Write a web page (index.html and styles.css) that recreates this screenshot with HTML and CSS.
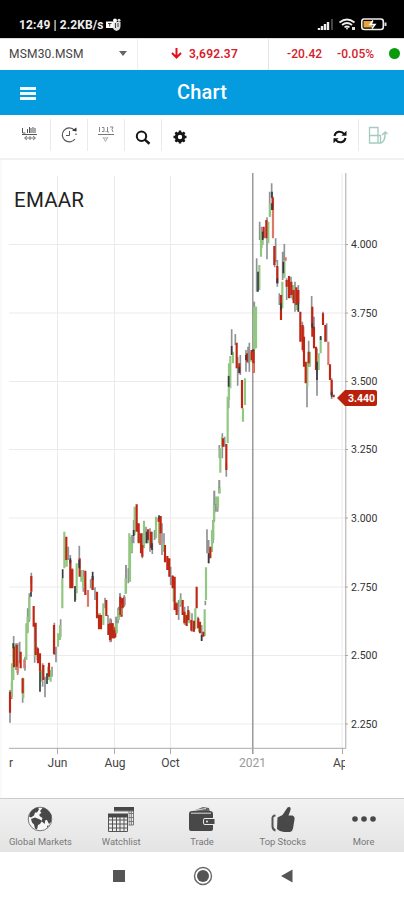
FILE: index.html
```
<!DOCTYPE html>
<html lang="en">
<head>
    <meta charset="UTF-8">
    <meta name="viewport" content="width=device-width, initial-scale=1.0">
    <title>Chart</title>
    <link rel="stylesheet" href="styles.css">
</head>
<body>
    <div class="status">
        <span class="clock">12:49 | 2.2KB/s</span>
        <svg class="teams" width="16" height="14" viewBox="0 0 16 14">
            <path d="M6 4h8.500v4q0 4-4 5-3-1-4.500-4z" fill="#ddd"/>
            <circle cx="9" cy="2.500" r="2" fill="#fff"/><circle cx="13" cy="2.200" r="1.500" fill="#ddd"/>
            <path d="M0 3.500h7.500V10H0z" fill="#fff"/><path d="M2 5.500h3.500M3.700 5.500v3M9.500 5v5M12 5v4" stroke="#444" fill="none"/>
        </svg>
        <svg class="signal" width="72" height="16" viewBox="0 0 72 16">
            <path d="M2 12v2M5 10v4M8 8v6M11 6v8" stroke="#eee" stroke-width="2.400"/>
            <path d="M15 3v11" stroke="#444" stroke-width="2"/>
            <path d="M22.500 6.500q7.500-6 15 0M25 9q5-4 10 0M27.500 11.300q2.500-2 5 0" stroke="#eee" stroke-width="1.700" fill="none"/>
            <path d="M28.500 11.500h3L30 14zM35 11h3v3h-3z" fill="#ddd"/>
            <rect x="44.800" y="3" width="21.500" height="10.500" rx="2.500" stroke="#eee" stroke-width="1.600" fill="none"/>
            <path d="M68.500 6.500v3.500" stroke="#ddd" stroke-width="2"/>
            <path d="M46.500 5h9v6.500h-9z" fill="#e8a33a"/><path d="M56 4.500l-3 4h5l-3 4" stroke="#fff" stroke-width="1.500" fill="none"/>
        </svg>
    </div>

    <div class="ticker">
        <div class="symbol">MSM30.MSM <i class="caret"></i></div>
        <div class="last">
            <svg width="11" height="11" viewBox="0 0 11 11"><path d="M5.500 0v9M1 5l4.500 4.500L10 5" stroke="#e3101b" stroke-width="2" fill="none"/></svg>
            <b>3,692.37</b>
        </div>
        <div class="change"><span>-20.42</span><span>-0.05%</span><i class="dot"></i></div>
    </div>

    <div class="header">
        <div class="menu"><i></i><i></i><i></i></div>
        <h1>Chart</h1>
    </div>

    <div class="toolbar">
        <div class="tool first">
            <svg width="18" height="16" viewBox="0 0 18 16"><path d="M1.500 2v5h3M6.500 3v4M8.500 1v6M10 2v5M12 1v6M14 2v5M1 8.500h15" stroke="#555" fill="none"/><path d="M4 12h10M6 10l-2.500 2L6 14M12 10l2.500 2-2.500 2M9 10v4" stroke="#777" fill="none"/></svg>
        </div>
        <div class="tool clocktool">
            <svg width="18" height="18" viewBox="0 0 18 18"><path d="M14.500 4.200A7 7 0 1 0 15 13M16 7.500V9" stroke="#555" stroke-width="1.200" fill="none"/><path d="M12 4.500l4.500 1V1.500z" fill="#333"/><path d="M9.500 5v4.500H6" stroke="#555" fill="none"/></svg>
        </div>
        <div class="tool">
            <svg width="18" height="18" viewBox="0 0 18 18"><path d="M2.500 1v5M5 1.500h2v4H5M9 5v1M10.500 1v5h1.500M13 1h3l-1 2.500 1 2.500" stroke="#888" fill="none"/><path d="M1 8.500h16" stroke="#777"/><path d="M6 11l2.500 4.500L11 11M7 12h3" stroke="#aaa" fill="none"/></svg>
        </div>
        <div class="tool">
            <svg class="low" width="16" height="16" viewBox="0 0 16 16"><circle cx="6.500" cy="6.300" r="4.700" stroke="#151515" stroke-width="2" fill="none"/><path d="M9.800 9.600l4.700 4.200" stroke="#151515" stroke-width="2.500"/></svg>
        </div>
        <div class="tool gear">
            <svg class="low" width="14" height="14" viewBox="0 0 14 14"><circle cx="7" cy="7" r="3.700" stroke="#151515" stroke-width="3" fill="none"/><path d="M7 .5v2M7 11.500v2M.5 7h2M11.500 7h2M2.400 2.400l1.500 1.500M10.100 10.100l1.500 1.500M2.400 11.600l1.500-1.500M10.100 3.900l1.500-1.500" stroke="#151515" stroke-width="2.500"/></svg>
        </div>
        <div class="tool refresh">
            <svg class="low" width="14" height="14" viewBox="0 0 14 14"><path d="M1.500 6C2.500 1 8.500.5 11 3.800M12.500 8C11.500 13 5.500 13.500 3 10.200" stroke="#151515" stroke-width="2" fill="none"/><path d="M13.500.7v5.100H8.400zM.5 13.300V8.200h5.100z" fill="#151515"/></svg>
        </div>
        <div class="tool rotate">
            <svg width="20" height="19" viewBox="0 0 20 19"><path d="M1.500 1.500H10V17H1.500zM1.500 9.500h11V17H10" stroke="#a3cbbf" stroke-width="1.300" fill="none"/><path d="M13 17q4.500-2 4-10M14 9l3.300-3L19.500 8" stroke="#a3cbbf" stroke-width="1.500" fill="none"/></svg>
        </div>
    </div>

    <div class="chart">
        <svg width="404" height="638" viewBox="0 160 404 638">
            <path class="grid" d="M9 244.500H345M9 313H345M9 381.500H345M9 449.500H345M9 518H345M9 587H345M9 655.500H345M9 724H345M57.500 176V748M114.500 176V748M170.500 176V748M342 174V748"/>
            <path class="year" d="M252.800 173V754"/>
            <path class="axis" d="M9 748.300H345.800V173M57.500 748v6M114.500 748v6M170.500 748v6M342.500 748v6M345 244.500h3M345 313h3M345 381.500h3M345 449.500h3M345 518h3M345 587h3M345 655.500h3M345 724h3"/>

            <!-- April to August -->
            <g transform="translate(0 500) scale(.3333)">
                <path class="wick" d="M30 570V668M35 545V597M41 408V470M48 430V510M53 430V525M59 425V490M68 533V608M75 470V512M83 325V395M88 280V365M94 218V250M104 370V488M112 440V480M128 490V560M135 530V592M156 500V530M163 368V465M168 440V487M182 358V410M205 140V180M211 165V240M217 205V260M238 137V200M250 210V275M272 238V265M285 262V300M297 340V385M315 293V325M324 345V405M343 385V415M360 280V350M356 320V360M372 290V320M378 195V240"/>
                <path class="light" d="M73 478V505M53 480V520M264 270V320"/>
                <path class="up" d="M36 490V590M40 430V540M46 440V500M70 535V595M79 370V480M83 350V400M88 292V360M105 425V470M124 510V545M145 500V540M152 510V545M174 400V440M180 375V420M187 235V325M193 95V205M200 140V200M226 270V300M230 190V280M244 210V245M250 230V265M277 235V270M300 340V370M310 310V375M350 350V400M356 330V355M378 225V280M388 100V245"/>
                <path class="down" d="M30 575V638M42 440V502M50 435V500M62 455V505M68 535V580M94 228V275M101 318V380M107 368V465M114 445V490M120 460V515M130 495V540M147 488V530M162 375V462M199 110V180M211 180V265M217 208V265M239 175V230M256 212V285M278 228V270M291 275V355M297 345V388M303 345V388M319 300V348M326 372V405M332 358V425M338 370V415M346 380V412M365 295V350M373 290V315"/>
                <path class="dark" d="M93 275V290M120 515V575M141 520V552M188 208V235M211 175V190M225 258V305M238 180V205M278 215V240M40 430V445"/>
            </g>

            <!-- August to November -->
            <g transform="translate(110 480) scale(.3333)">
                <path class="wick" d="M1 415V487M18 410V460M30 340V410M24 385V430M43 345V380M48 255V330M55 265V310M66 165V220M71 120V190M97 160V235M108 140V190M120 145V215M127 155V222M134 150V180M156 130V225M162 160V215M182 260V315M188 285V320M206 360V420M212 340V380M224 380V435M234 378V425M246 400V455M264 410V445M286 362V376M291 148V220M296 180V250M306 170V215M309 120V190M313 32V125M318 50V95M328 0V40M275 435V482"/>
                <path class="up" d="M19 430V460M25 390V420M34 370V405M47 295V342M60 170V305M66 190V215M74 80V165M86 150V185M102 122V205M115 165V190M138 110V175M147 120V190M160 190V210M191 300V365M200 365V395M212 355V375M226 400V435M238 395V430M256 385V447M267 430V455M284 388V468M288 262V360M306 150V215M310 120V180M323 50V80M328 20V40"/>
                <path class="light" d="M150 120V195"/>
                <path class="down" d="M0 430V480M7 430V475M13 450V475M31 350V405M38 355V385M80 73V155M86 130V190M93 160V220M97 195V230M114 148V180M123 155V205M146 113V125M152 108V160M165 195V247M172 228V270M178 235V290M188 288V325M194 290V390M200 370V405M218 360V405M223 395V430M230 405V438M235 390V420M244 420V452M252 422V455M260 320V385M265 415V445M270 425V460M280 455V470M301 200V235"/>
                <path class="dark" d="M110 155V190M126 190V210M296 220V250M275 465V483M71 150V168M147 106V115"/>
            </g>

            <!-- November to January -->
            <g transform="translate(190 300) scale(.3333)">
                <path class="wick" d="M73 572V640M83 590V635M88 435V475M88 540V580M97 400V475M104 410V440M109 490V530M116 225V325M125 88V165M136 102V135M143 170V257M151 165V225M168 150V215M174 140V190M178 128V215M192 5V40"/>
                <path class="up" d="M72 615V660M78 590V612M84 590V625M88 565V580M91 445V518M96 410V440M113 290V430M117 190V300M121 168V265M129 155V190M159 325V365M165 235V315M184 155V185M193 20V150M198 20V145"/>
                <path class="down" d="M99 415V440M109 432V510M140 128V205M148 190V220M156 240V325M171 160V185M185 150V180M191 150V218"/>
                <path class="dark" d="M125 138V165M116 228V260M148 200V218M168 165V180M190 148V160"/>
            </g>

            <!-- January to April -->
            <g transform="translate(235 170) scale(.3333)">
                <path class="wick" d="M58 395V440M65 265V365M74 155V210M80 170V235M96 142V268M104 65V140M110 40V80M122 205V275M119 255V292M127 270V350M133 370V405M148 222V320M143 245V330M155 325V390M168 320V385M180 335V425M190 345V425M202 455V515M216 600V712M221 512V590M230 378V470M237 440V535M246 535V677M264 425V460M275 460V515M290 625V687"/>
                <path class="up" d="M58 410V535M63 410V532M73 285V360M78 190V260M83 180V225M100 155V220M105 100V140M142 335V415M148 270V325M174 345V390M217 575V650M225 545V590M251 550V600M257 500V550M185 360V420"/>
                <path class="light" d="M114 80V205M152 262V272M280 515V585M55 545V608M205 470V545"/>
                <path class="down" d="M55 545V580M86 170V205M94 150V205M113 85V120M118 228V285M127 288V340M138 375V450M155 330V350M162 318V385M169 335V375M176 360V400M184 352V405M190 360V400M196 425V515M203 465V540M207 500V590M212 575V640M221 545V580M232 410V500M237 470V535M243 530V600M264 430V465M271 465V515M285 583V630M290 630V675M296 674V682"/>
                <path class="dark" d="M69 305V365M111 65V85M111 100V120M145 275V310M190 398V425M127 325V340M232 460V475M257 498V510M246 575V630M138 400V420M290 665V680M83 185V210"/>
            </g>

            <g class="price">
                <text x="351" y="248">4.000</text><text x="351" y="317">3.750</text>
                <text x="351" y="385">3.500</text><text x="351" y="453">3.250</text>
                <text x="351" y="522">3.000</text><text x="351" y="590.500">2.750</text>
                <text x="351" y="659">2.500</text><text x="351" y="727.500">2.250</text>
            </g>
            <path class="tag" d="M337 398l8-8h30q2 0 2 2v12q0 2-2 2h-30z"/>
            <text class="tag-text" x="348" y="401.500">3.440</text>
            <g class="month">
                <text x="9" y="767">r</text><text x="57.500" y="767" text-anchor="middle">Jun</text>
                <text x="115" y="767" text-anchor="middle">Aug</text><text x="170.500" y="767" text-anchor="middle">Oct</text>
                <text class="muted" x="252.500" y="767" text-anchor="middle">2021</text>
            </g>
            <svg x="330" y="755" width="15" height="20"><text class="month" x="3" y="12">Ap</text></svg>
            <text class="name" x="14" y="206.500" textLength="70">EMAAR</text>
        </svg>
    </div>

    <div class="tabs">
        <div class="tab">
            <svg width="26" height="26" viewBox="0 0 26 26"><circle cx="13" cy="13" r="11.800" fill="#f7f7f7" stroke="#777"/><path d="M3 7q3-5 8-5.500l1 2-2 3-2 0-1 3-3 2-2-1zM4 13l4-1.500 5 2 2 1.500-2 3-2 1-1 4.500-2-1-1-4-2-2zM13 5l3-3.500q6 2 8.500 8L24 16l-2 2-2-4-1.500 0-1 4-3-3 1-3-3-2 0-2 2-1zM20 20l2-1-2 3z" fill="#484848"/></svg>
            <span>Global Markets</span>
        </div>
        <div class="tab">
            <svg width="26" height="26" viewBox="0 0 26 26"><path d="M6 1h20v4H6z" fill="#484848"/><path d="M6 5h19.500v14H20M21 5v14M23.300 5v14M6 7.500h19.500M20 11.500h5.500M20 15.500h5.500" stroke="#777" fill="none"/><path d="M0 7h20.500v19H0z" fill="#eee"/><path d="M.5 10v15.500h19V10M4.500 10v15.500M8.500 10v15.500M12 10v15.500M16 10v15.500M.5 14h19M.5 18h19M.5 22h19" stroke="#555" fill="none"/><path d="M0 7.500h20v4H0z" fill="#484848"/></svg>
            <span>Watchlist</span>
        </div>
        <div class="tab">
            <svg width="26" height="26" viewBox="0 0 26 26"><path d="M4 5l10-4 6 1 1 4z" fill="#666"/><path d="M0 8q0-3 3-3h18q3 0 3 3v4h-8q-2 0-2 3v1q0 3 2 3h8v4q0 2-2 2H2q-2 0-2-2z" fill="#484848"/><path d="M2 7.200h20M5 4.500l12-2" stroke="#ddd"/><path d="M16 13h9.500v5H16q-1 0-1-1v-3q0-1 1-1z" fill="#484848"/><circle cx="18" cy="15.500" r="1" fill="#eee"/></svg>
            <span>Trade</span>
        </div>
        <div class="tab">
            <svg width="26" height="26" viewBox="0 0 26 26"><path d="M7.500 11.500l5-2.500 4-6q1-2.500 3-2 2 .5.500 4.500l-1.500 4h4q2.500 1 2 4l-1.500 9q-.5 3-3 3.500h-6q-4 0-7-3z" fill="#484848"/><path d="M5.500 9.500Q2 9.500 2.500 13.500v7q.5 3.500 3 4" stroke="#555" stroke-width="2" fill="none"/></svg>
            <span>Top Stocks</span>
        </div>
        <div class="tab">
            <svg width="26" height="26" viewBox="0 0 26 26"><circle cx="4" cy="13" r="2.800" fill="#484848"/><circle cx="13" cy="13" r="2.800" fill="#484848"/><circle cx="22" cy="13" r="2.800" fill="#484848"/></svg>
            <span>More</span>
        </div>
    </div>

    <div class="navbar">
        <svg width="14" height="14" viewBox="0 0 14 14"><path d="M1 1h12v12H1z" fill="#555"/></svg>
        <svg width="20" height="20" viewBox="0 0 20 20"><circle cx="10" cy="10" r="8.500" stroke="#666" stroke-width="1.400" fill="none"/><circle cx="10" cy="10" r="6" fill="#555"/></svg>
        <svg width="14" height="14" viewBox="0 0 14 14"><path d="M1 7l11.500-6.500v13z" fill="#555"/></svg>
    </div>
</body>
</html>
```

FILE: styles.css
```
* {
    box-sizing: border-box;
}
body {
    margin: 0;
    width: 404px;
    height: 900px;
    overflow: hidden;
    font-family: Roboto, "Liberation Sans", sans-serif;
    background-color: #fff;
}
svg {
    display: block;
}
.status {
    height: 38px;
    padding: 14px 15px 0 19px;
    display: flex;
    background-color: #000;
    color: #eee;
}
.clock {
    width: 87px;
    margin-top: 3px;
    font-size: 12px;
    font-weight: bold;
    line-height: 16px;
    letter-spacing: 0.1px;
    white-space: nowrap;
}
.teams {
    margin-top: 4px;
}
.signal {
    margin: 2px 0 0 auto;
}
.ticker {
    height: 32px;
    display: flex;
    font-size: 12px;
    color: #d5202b;
    border-top: 1px solid #ddd;
}
.symbol {
    width: 138px;
    padding: 0 10px 2px 9px;
    display: flex;
    align-items: center;
    justify-content: space-between;
    letter-spacing: 0.2px;
    color: #444;
    border-right: 1px solid #eee;
}
.caret {
    border: 4px solid transparent;
    border-top: 5px solid #666;
    border-bottom: 0;
}
.last {
    width: 131px;
    display: flex;
    align-items: center;
    padding: 0 0 2px 33px;
    gap: 7px;
    border-right: 1px solid #e4e4e4;
}
.last b {
    font-weight: 600;
    letter-spacing: 0.2px;
}
.change {
    flex: 1;
    display: flex;
    align-items: center;
    padding: 0 0 2px 18px;
    font-weight: 500;
    letter-spacing: 0.1px;
}
.change span {
    width: 50px;
    white-space: nowrap;
}
.dot {
    width: 11px;
    height: 11px;
    margin-left: 2px;
    flex: none;
    border-radius: 50%;
    background-color: #079b0b;
}
.header {
    height: 45px;
    display: grid;
    grid-template-columns: 60px 1fr 60px;
    align-items: center;
    background-color: #059bdf;
}
.menu {
    padding: 2px 0 0 20px;
    display: flex;
    flex-direction: column;
    gap: 2px;
}
.menu i {
    width: 16px;
    height: 3px;
    background-color: #eefaff;
}
.header h1 {
    margin: 0 0 1px;
    color: #fff;
    font-size: 20px;
    font-weight: 500;
    letter-spacing: 0.2px;
    text-align: center;
}
.toolbar {
    height: 45px;
    padding: 4px 2px 7px 2px;
    display: flex;
    border-bottom: 2px solid #f1f1f1;
}
.tool {
    width: 37px;
    padding-top: 7px;
    display: flex;
    justify-content: center;
    align-items: flex-start;
    border-right: 1px solid #eaeaea;
}
.tool .low {
    margin-top: 4px;
}
.tool.first {
    width: 49px;
    padding-left: 7px;
}
.tool.gear {
    width: 36px;
    border: 0;
}
.tool.refresh {
    margin-left: auto;
}
.tool.rotate {
    width: 43px;
    padding-right: 5px;
    border: 0;
}
.chart {
    height: 638px;
    border-left: 2px solid #fafafa;
}
.chart > svg {
    margin-left: -2px;
}
.grid {
    stroke: #ebebeb;
    fill: none;
}
.axis {
    stroke: #aaa;
    fill: none;
}
.year {
    stroke: #8b8b8b;
    stroke-width: 1.3;
}
.wick, .up, .down, .dark, .light {
    fill: none;
    stroke-width: 6.5;
}
.wick {
    stroke: #8f9396;
    stroke-width: 5;
}
.up {
    stroke: #91c780;
}
.down {
    stroke: #c02614;
}
.light {
    stroke: #dc7769;
}
.dark {
    stroke: #343a3e;
    stroke-width: 5;
}
.price {
    font-size: 10.5px;
    fill: #333;
}
.tag {
    fill: #b9210c;
}
.tag-text {
    font-size: 10.5px;
    font-weight: bold;
    fill: #fff;
}
.month {
    font-size: 12px;
    fill: #444;
}
.muted {
    fill: #999;
}
.name {
    font-size: 20.5px;
    fill: #222;
}
.tabs {
    height: 54px;
    display: flex;
    border-top: 1px solid #ccc;
    background: linear-gradient(#f2f2f2, #e4e4e4);
}
.tab {
    flex: 1;
    padding-top: 7px;
    display: flex;
    flex-direction: column;
    align-items: center;
    gap: 4px;
    font-size: 9.4px;
    line-height: 12px;
    color: #777;
    white-space: nowrap;
}
.navbar {
    height: 48px;
    padding-left: 1px;
    display: flex;
    justify-content: center;
    align-items: center;
    gap: 67px;
}
```
